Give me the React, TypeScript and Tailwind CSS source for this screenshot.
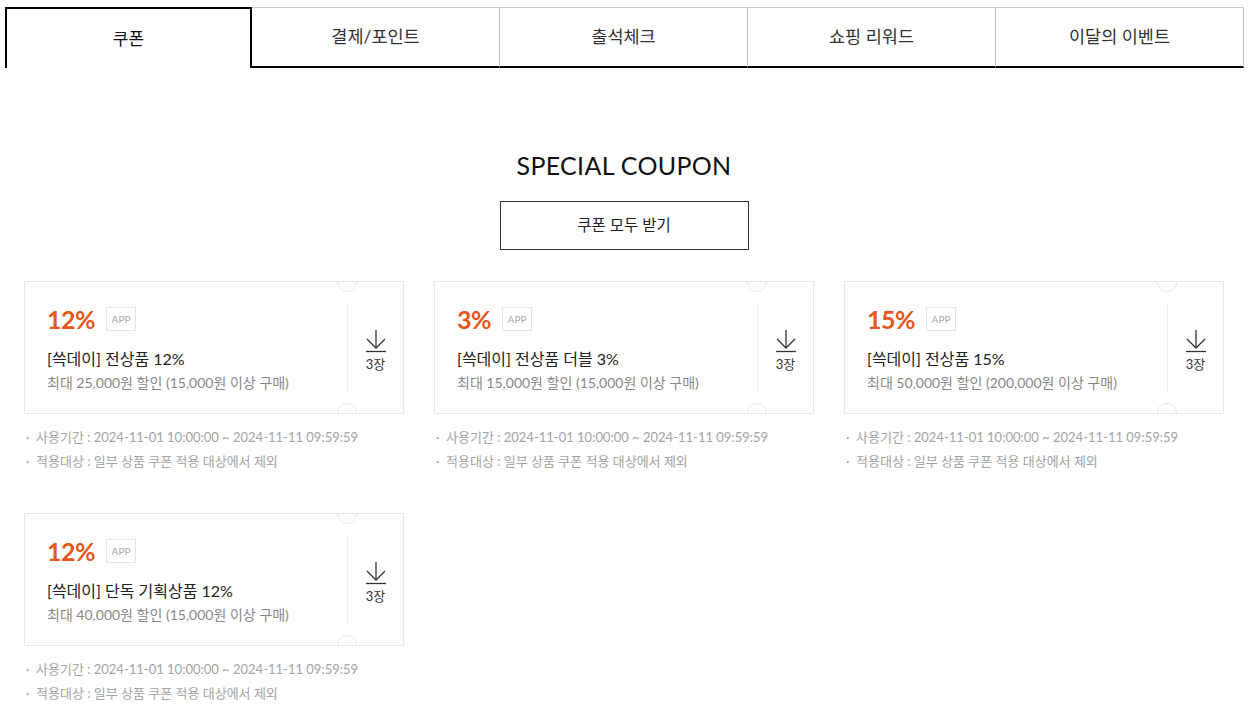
import React from "react";

const tabs = ["쿠폰", "결제/포인트", "출석체크", "쇼핑 리워드", "이달의 이벤트"];

const coupons = [
  { rate: "12%", title: "[쓱데이] 전상품 12%", desc: "최대 25,000원 할인 (15,000원 이상 구매)" },
  { rate: "3%", title: "[쓱데이] 전상품 더블 3%", desc: "최대 15,000원 할인 (15,000원 이상 구매)" },
  { rate: "15%", title: "[쓱데이] 전상품 15%", desc: "최대 50,000원 할인 (200,000원 이상 구매)" },
  { rate: "12%", title: "[쓱데이] 단독 기획상품 12%", desc: "최대 40,000원 할인 (15,000원 이상 구매)" },
];

const DownIcon = () => (
  <svg width="22" height="24" viewBox="0 0 22 24" fill="none" stroke="#333" strokeWidth="1.3">
    <path d="M11 1v18" />
    <path d="M2 10l9 9 9-9" />
    <path d="M1 22.5h20" />
  </svg>
);

const CouponCard = ({ rate, title, desc }: { rate: string; title: string; desc: string }) => (
  <div>
    <div className="relative flex h-[133px] overflow-hidden border border-[#e8e8e8] bg-white">
      <div className="flex-1 pl-[22px] pt-[22px]">
        <div className="flex items-center">
          <span className="text-[25px] font-bold leading-[30px] tracking-[-0.5px] text-[#e4571d]">{rate}</span>
          <span className="ml-[11px] flex h-[24px] w-[30px] items-center justify-center border border-[#e4e4e4] text-[10px] text-[#a8a8a8]">
            APP
          </span>
        </div>
        <p className="mt-[15px] text-[16px] leading-[20px] text-[#222]">{title}</p>
        <p className="mt-[5px] text-[14px] leading-[18px] text-[#888]">{desc}</p>
      </div>
      <div className="my-[21px] flex w-[56px] flex-col items-center justify-center border-l border-[#eeeeee] pt-[6px]">
        <DownIcon />
        <span className="mt-[2px] text-[13px] leading-[18px] text-[#333]">3장</span>
      </div>
      <span className="absolute top-[-10px] left-[312px] h-[20px] w-[20px] rounded-full border border-[#e8e8e8] bg-white" />
      <span className="absolute bottom-[-10px] left-[312px] h-[20px] w-[20px] rounded-full border border-[#e8e8e8] bg-white" />
    </div>
    <ul className="mt-[11px] text-[13px] leading-[24px] text-[#a3a3a3]">
      <li className="flex">
        <span className="w-[12px] pl-[2px]">·</span>
        <span>사용기간 : 2024-11-01 10:00:00 ~ 2024-11-11 09:59:59</span>
      </li>
      <li className="flex">
        <span className="w-[12px] pl-[2px]">·</span>
        <span>적용대상 : 일부 상품 쿠폰 적용 대상에서 제외</span>
      </li>
    </ul>
  </div>
);

export default function App() {
  return (
    <div
      className="min-h-screen w-full bg-white"
      style={{ fontFamily: 'Lato, "Noto Sans CJK KR", sans-serif' }}
    >
      <div className="w-[1248px]">
        <div className="ml-[5px] mt-[7px] flex w-[1239px]">
          {tabs.map((t, i) =>
            i === 0 ? (
              <div
                key={t}
                className="flex h-[61px] w-[247px] shrink-0 items-center justify-center border-2 border-b-0 border-black text-[17px] text-[#111]"
              >
                {t}
              </div>
            ) : (
              <div
                key={t}
                className="flex h-[61px] flex-1 items-center justify-center border-t border-r border-b-2 border-t-[#c8c8c8] border-r-[#c8c8c8] border-b-black text-[17.5px] text-[#333]"
              >
                {t}
              </div>
            )
          )}
        </div>

        <h2 className="mt-[79px] text-center text-[25px] leading-[36px] tracking-[0.3px] text-[#111]">
          SPECIAL COUPON
        </h2>
        <div className="mt-[18px] flex justify-center">
          <button className="h-[49px] w-[249px] border border-[#333] text-[15.5px] text-[#222]">
            쿠폰 모두 받기
          </button>
        </div>

        <div className="ml-[24px] mt-[31px] grid w-[1200px] grid-cols-3 gap-x-[30px] gap-y-[40px]">
          {coupons.map((c, i) => (
            <CouponCard key={i} {...c} />
          ))}
        </div>
      </div>
    </div>
  );
}
